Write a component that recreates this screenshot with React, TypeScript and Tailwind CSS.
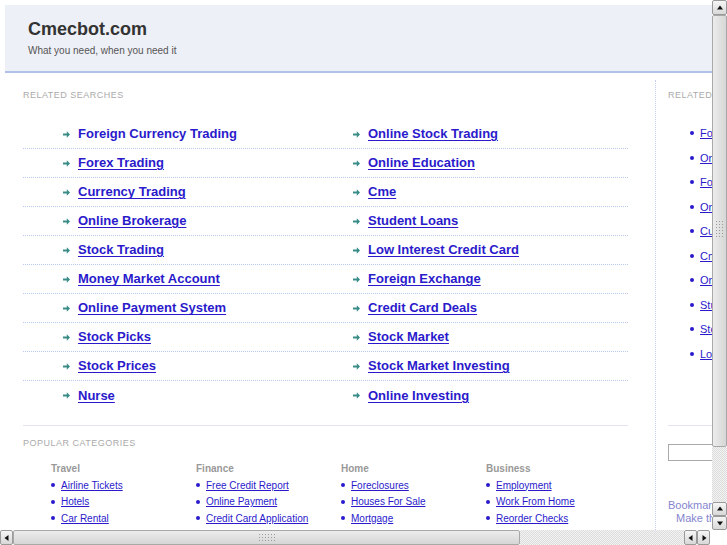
import React from 'react';

const related: [string, string][] = [
  ['Foreign Currency Trading', 'Online Stock Trading'],
  ['Forex Trading', 'Online Education'],
  ['Currency Trading', 'Cme'],
  ['Online Brokerage', 'Student Loans'],
  ['Stock Trading', 'Low Interest Credit Card'],
  ['Money Market Account', 'Foreign Exchange'],
  ['Online Payment System', 'Credit Card Deals'],
  ['Stock Picks', 'Stock Market'],
  ['Stock Prices', 'Stock Market Investing'],
  ['Nurse', 'Online Investing'],
];

const sidebar = [
  'Foreign Currency Trading',
  'Online Stock Trading',
  'Forex Trading',
  'Online Education',
  'Currency Trading',
  'Cme',
  'Online Brokerage',
  'Student Loans',
  'Stock Trading',
  'Low Interest Credit Card',
];

const categories = [
  { title: 'Travel', links: ['Airline Tickets', 'Hotels', 'Car Rental'] },
  { title: 'Finance', links: ['Free Credit Report', 'Online Payment', 'Credit Card Application'] },
  { title: 'Home', links: ['Foreclosures', 'Houses For Sale', 'Mortgage'] },
  { title: 'Business', links: ['Employment', 'Work From Home', 'Reorder Checks'] },
];

function Arrow() {
  return (
    <svg width="7" height="7" viewBox="0 0 7 7" className="shrink-0">
      <path d="M0 2.6h3.8V0.2L7 3.5 3.8 6.8V4.4H0z" fill="#3a8c88" />
    </svg>
  );
}

function Bullet() {
  return <span className="inline-block w-[4px] h-[4px] rounded-full bg-[#2a1acb] shrink-0" />;
}

function ScrollBtn({ dir }: { dir: 'up' | 'down' | 'left' | 'right' }) {
  const tri =
    dir === 'up'
      ? 'M1 5.5L4 1.5 7 5.5z'
      : dir === 'down'
        ? 'M1 2.5L4 6.5 7 2.5z'
        : dir === 'left'
          ? 'M5.5 1L1.5 4 5.5 7z'
          : 'M2.5 1L6.5 4 2.5 7z';
  return (
    <div className="w-full h-full flex items-center justify-center bg-gradient-to-b from-[#f6f6f6] to-[#d8d8d8] border border-[#9a9a9a] rounded-[2px]">
      <svg width="8" height="8" viewBox="0 0 8 8">
        <path d={tri} fill="#111" />
      </svg>
    </div>
  );
}

function Grip({ vertical }: { vertical?: boolean }) {
  return (
    <div className={vertical ? 'grid grid-cols-3 gap-[2px]' : 'grid grid-cols-6 gap-[2px]'}>
      {Array.from({ length: 18 }).map((_, i) => (
        <span key={i} className="w-[1px] h-[1px] bg-[#9a9a9a]" />
      ))}
    </div>
  );
}

const track = 'bg-[repeating-conic-gradient(#dcdcdc_0_25%,#f3f3f3_0_50%)] bg-[length:2px_2px]';

export default function App() {
  return (
    <div className="w-[727px] h-[545px] overflow-hidden bg-white flex flex-col font-['Liberation_Sans',Arial,sans-serif]">
      <div className="flex h-[530px]">
        <div className="w-[712px] overflow-hidden pt-[5px] pl-[5px]">
          <div className="w-[900px]">
            <header className="h-[68px] bg-[#eef0f7] border-b-2 border-[#b0c2ea] pl-[23px] pt-[13px]">
              <h1 className="text-[18px] leading-[22px] font-bold text-[#333]">Cmecbot.com</h1>
              <p className="text-[10px] leading-[13px] mt-[4px] text-[#555]">What you need, when you need it</p>
            </header>

            <div className="flex mt-[7px]">
              <main className="w-[651px] shrink-0 border-r border-dotted border-[#c4cdf0] pl-[18px] pr-[27px] pt-[9px] h-[460px]">
                <h2 className="text-[9px] leading-[12px] tracking-[0.5px] text-[#aaa] uppercase">Related Searches</h2>
                <ul className="mt-[19px]">
                  {related.map(([a, b], i) => (
                    <li
                      key={a}
                      className={
                        'flex h-[29px] items-center ' +
                        (i < related.length - 1 ? 'border-b border-dotted border-[#b8cbee]' : '')
                      }
                    >
                      <div className="w-[330px] pl-[40px] flex items-center gap-[8px]">
                        <Arrow />
                        <a
                          href="#"
                          className={
                            'text-[13px] font-bold text-[#2a1acb] ' + (i === 0 ? '' : 'underline underline-offset-2')
                          }
                        >
                          {a}
                        </a>
                      </div>
                      <div className="flex items-center gap-[8px]">
                        <Arrow />
                        <a href="#" className="text-[13px] font-bold text-[#2a1acb] underline underline-offset-2">
                          {b}
                        </a>
                      </div>
                    </li>
                  ))}
                </ul>
                <div className="mt-[15px] border-t border-[#e2e4f2]" />
                <h2 className="mt-[11px] text-[9px] leading-[12px] tracking-[0.5px] text-[#aaa] uppercase">
                  Popular Categories
                </h2>
                <div className="flex mt-[13px] pl-[28px]">
                  {categories.map((c) => (
                    <div key={c.title} className="w-[145px] shrink-0">
                      <h3 className="text-[10px] leading-[13px] font-bold text-[#999]">{c.title}</h3>
                      <ul className="mt-[2px]">
                        {c.links.map((l) => (
                          <li key={l} className="flex items-center gap-[6px] h-[16.5px]">
                            <Bullet />
                            <a href="#" className="text-[10px] text-[#2a1acb] underline">
                              {l}
                            </a>
                          </li>
                        ))}
                      </ul>
                    </div>
                  ))}
                </div>
              </main>

              <aside className="w-[220px] pl-[12px] pt-[9px]">
                <h2 className="text-[9px] leading-[12px] tracking-[0.5px] text-[#aaa] uppercase">Related Searches</h2>
                <ul className="mt-[20px] pl-[22px]">
                  {sidebar.map((s) => (
                    <li key={s} className="flex items-center gap-[6px] h-[24.5px]">
                      <Bullet />
                      <a href="#" className="text-[11px] text-[#2a1acb] underline">
                        {s}
                      </a>
                    </li>
                  ))}
                </ul>
                <div className="mt-[59px] border-t border-[#e2e4f2]" />
                <input className="block mt-[18px] w-[150px] h-[17px] border border-[#aaa] bg-white outline-none" />
                <div className="mt-[38px] text-[11px] leading-[13px] text-[#8585cf]">
                  <p>Bookmark this page</p>
                  <p className="pl-[8px]">Make this your homepage</p>
                </div>
              </aside>
            </div>
          </div>
        </div>

        <div className="w-[15px] flex flex-col">
          <div className="h-[15px]">
            <ScrollBtn dir="up" />
          </div>
          <div className="h-[432px] bg-gradient-to-r from-[#ececec] to-[#d6d6d6] border border-[#a8a8a8] rounded-[2px] flex items-start justify-center pt-[205px]">
            <Grip vertical />
          </div>
          <div className={'flex-1 ' + track} />
          <div className="h-[14px]">
            <ScrollBtn dir="up" />
          </div>
          <div className="h-[14px]">
            <ScrollBtn dir="down" />
          </div>
        </div>
      </div>

      <div className="flex h-[15px]">
        <div className="w-[13px]">
          <ScrollBtn dir="left" />
        </div>
        <div className="w-[507px] bg-gradient-to-b from-[#ececec] to-[#d6d6d6] border border-[#a8a8a8] rounded-[2px] flex items-center justify-center">
          <Grip />
        </div>
        <div className={'w-[164px] ' + track} />
        <div className="w-[13px]">
          <ScrollBtn dir="left" />
        </div>
        <div className="w-[13px]">
          <ScrollBtn dir="right" />
        </div>
        <div className="flex-1 bg-white" />
      </div>
    </div>
  );
}
